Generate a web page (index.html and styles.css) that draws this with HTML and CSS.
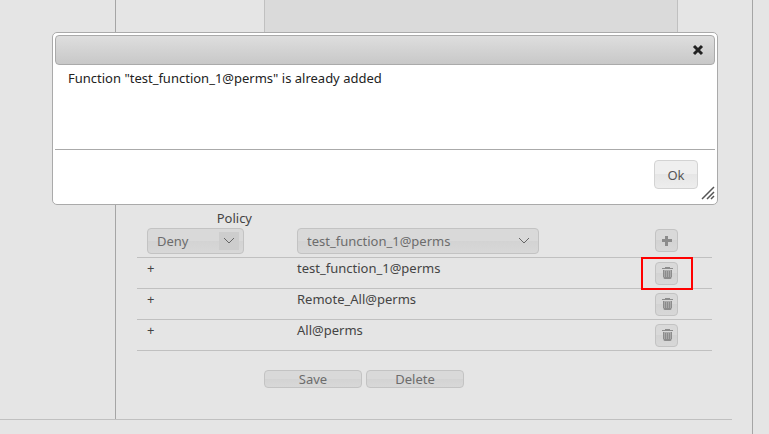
FILE: index.html
```html
<!DOCTYPE html>
<html lang="en">
<head>
  <meta charset="UTF-8">
  <title>Policies</title>
  <link rel="stylesheet" href="styles.css">
</head>
<body>
  <svg class="icon-defs" aria-hidden="true">
    <symbol id="icon-trash" viewBox="0 0 12 12">
      <path d="M4 1V0h5v1h3v1H1V1z"/>
      <path fill-opacity=".6" d="M2 3h9v7q0 2-2 2H4q-2 0-2-2z"/>
      <path d="M2 3h1v7H2zM4 4h1v6H4zM6 4h1v6H6zM8 4h1v6H8zM10 3h1v7h-1zM3 10h7v1q0 1-1 1H4q-1 0-1-1z"/>
    </symbol>
    <symbol id="icon-arrow" viewBox="0 0 12 8">
      <path d="M1 1l5 5 5-5" fill="none" stroke="#666"/>
    </symbol>
  </svg>

  <div class="page">
    <div class="panel">
      <div class="sidebar"></div>
      <form class="editor">
        <div class="field">
          <textarea class="description" aria-label="Description" readonly></textarea>
        </div>
        <div class="field">
          <label class="field-label" for="policy">Policy</label>
        </div>

        <table class="functions">
          <tr class="add-row">
            <td class="col-policy">
              <span class="select select-policy">
                <select id="policy"><option>Deny</option><option>Allow</option></select>
                <svg><use href="#icon-arrow"/></svg>
              </span>
            </td>
            <td>
              <span class="select select-function">
                <select aria-label="Function"><option>test_function_1@perms</option><option>Remote_All@perms</option><option>All@perms</option></select>
                <svg><use href="#icon-arrow"/></svg>
              </span>
            </td>
            <td class="col-action">
              <button type="button" class="icon-btn" aria-label="Add"><svg viewBox="0 0 12 12"><path d="M4 1h3v3h4v3H7v4H4V7H1V4h3z"/></svg></button>
            </td>
          </tr>
          <tr>
            <td class="col-policy">+</td>
            <td>test_function_1@perms</td>
            <td class="col-action">
              <button type="button" class="icon-btn" aria-label="Remove"><svg><use href="#icon-trash"/></svg></button>
              <span class="highlight"></span>
            </td>
          </tr>
          <tr>
            <td class="col-policy">+</td>
            <td>Remote_All@perms</td>
            <td class="col-action"><button type="button" class="icon-btn" aria-label="Remove"><svg><use href="#icon-trash"/></svg></button></td>
          </tr>
          <tr>
            <td class="col-policy">+</td>
            <td>All@perms</td>
            <td class="col-action"><button type="button" class="icon-btn" aria-label="Remove"><svg><use href="#icon-trash"/></svg></button></td>
          </tr>
        </table>

        <div class="field actions">
          <div class="buttons">
            <button type="button" class="btn">Save</button>
            <button type="button" class="btn">Delete</button>
          </div>
        </div>
      </form>
    </div>
  </div>

  <div class="dialog" role="dialog" aria-labelledby="message">
    <div class="dialog-title">
      <button type="button" class="close" aria-label="Close"><svg viewBox="0 0 12 12"><path d="M2 2l8 8M10 2l-8 8"/></svg></button>
    </div>
    <p class="dialog-content" id="message">Function "test_function_1@perms" is already added</p>
    <div class="dialog-buttons">
      <button type="button" class="ok">Ok</button>
    </div>
    <svg class="resize" viewBox="0 0 14 14"><path d="M1 13L13 1M6 13l7-7M10 13l3-3"/></svg>
  </div>
</body>
</html>
```

FILE: styles.css
```css
* {
  box-sizing: border-box;
}

body {
  margin: 0;
  background: #e5e5e5;
  color: #444;
  font-family: "Noto Sans", Verdana, sans-serif;
  font-size: 13px;
  line-height: 18px;
}

button, select, textarea {
  font: inherit;
  color: inherit;
}

.icon-defs {
  display: none;
}

.page {
  min-height: 100vh;
  margin-right: 16px;
  padding-right: 20px;
  border-right: 1px solid #a5a5a5;
}

.panel {
  display: flex;
  border-bottom: 1px solid #c0c0c0;
}

.sidebar {
  width: 116px;
  border-right: 1px solid #a5a5a5;
}

.editor {
  flex: 1;
  padding: 0 20px 31px 21px;
}

.field {
  display: grid;
  grid-template-columns: 115px 1fr;
  column-gap: 12px;
}

.field-label {
  text-align: right;
}

.description {
  grid-column: 2;
  height: 190px;
  margin: 0 34px 19px 0;
  border: 1px solid #c0c0c0;
  border-top: 0;
  background: #dadada;
  resize: none;
}

.functions {
  width: 100%;
  border-collapse: collapse;
  table-layout: fixed;
}

.functions tr {
  height: 31px;
  border-bottom: 1px solid #c0c0c0;
}

.functions .add-row {
  height: 30px;
}

.functions td {
  padding: 1px 0 0;
  vertical-align: top;
}

.functions .col-policy {
  width: 160px;
  padding-left: 10px;
}

.functions .col-action {
  position: relative;
  width: 57px;
  padding-top: 4px;
}

.functions .add-row .col-action {
  padding-top: 2px;
}

.select {
  display: grid;
  grid-template-columns: 1fr 20px;
  align-items: center;
  height: 26px;
}

.select-policy {
  width: 97px;
}

.select-function {
  width: 242px;
}

.select select {
  grid-area: 1 / 1 / 2 / 3;
  width: 100%;
  height: 26px;
  padding: 0 9px;
  appearance: none;
}

.select svg {
  grid-area: 1 / 2;
  justify-self: end;
  width: 20px;
  height: 18px;
  margin-right: 5px;
  padding: 5px 4px;
  pointer-events: none;
}

.select-policy svg {
  background: #cdcdcd;
}

.select select, .btn, .icon-btn {
  border: 1px solid #c3c3c3;
  border-radius: 4px;
  background: linear-gradient(#d9d9d9 50%, #d3d3d3 50%, #d8d8d8);
  color: #6c6c6c;
}

.icon-btn {
  display: flex;
  align-items: center;
  justify-content: center;
  width: 23px;
  height: 23px;
  padding: 0;
}

.icon-btn svg {
  width: 12px;
  height: 12px;
  fill: #8c8c8c;
}

.highlight {
  position: absolute;
  top: -1px;
  left: -14px;
  width: 52px;
  height: 33px;
  border: 2px solid #f00;
  pointer-events: none;
}

.actions {
  margin-top: 19px;
}

.buttons {
  grid-column: 2;
  display: flex;
  gap: 4px;
}

.btn {
  width: 98px;
  height: 18px;
  padding: 0;
  line-height: 16px;
}

.dialog {
  position: fixed;
  top: 32px;
  left: 52px;
  right: 51px;
  padding: 2px;
  border: 1px solid #aaa;
  border-radius: 5px;
  background: #fff;
  color: #222;
}

.dialog-title {
  display: flex;
  align-items: center;
  justify-content: flex-end;
  height: 30px;
  padding-right: 10px;
  border: 1px solid #aaa;
  border-radius: 4px;
  background: linear-gradient(#dedede, #c8c8c8);
}

.close {
  width: 12px;
  height: 12px;
  padding: 0;
  border: 0;
  background: none;
}

.close svg {
  display: block;
  fill: none;
  stroke: #222;
  stroke-width: 3;
}

.dialog-content {
  min-height: 84px;
  margin: 0;
  padding: 4px 13px;
}

.dialog-buttons {
  display: flex;
  justify-content: flex-end;
  padding: 10px 17px 13px;
  border-top: 1px solid #aaa;
}

.ok {
  width: 44px;
  height: 29px;
  padding: 0;
  border: 1px solid #d3d3d3;
  border-radius: 4px;
  background: linear-gradient(#efefef 50%, #e6e6e6 50%, #ededed);
  color: #555;
}

.resize {
  position: absolute;
  right: 2px;
  bottom: 4px;
  width: 14px;
  height: 14px;
  stroke: #555;
  stroke-width: 1.5;
}
```
